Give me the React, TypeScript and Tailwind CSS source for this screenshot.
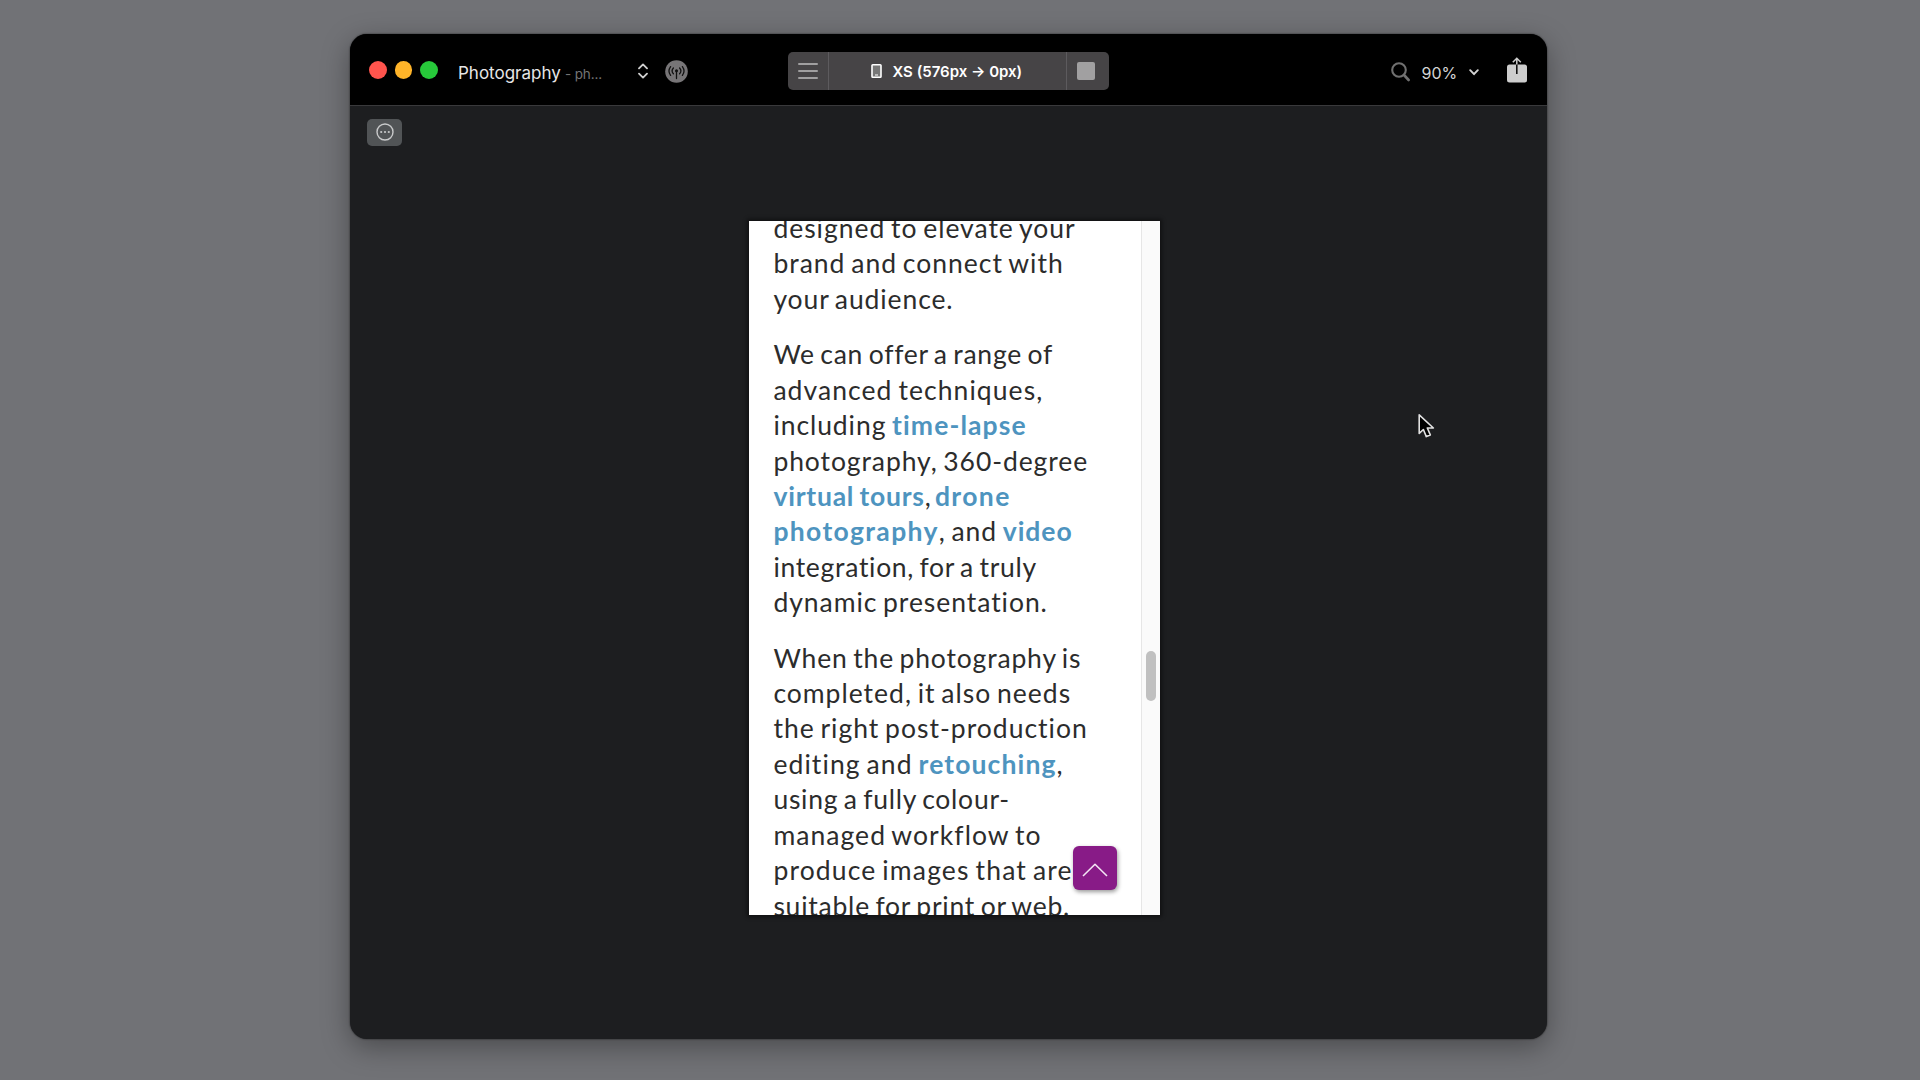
import React from 'react';

interface Segment {
  text: string;
  spacing: string;
  link?: boolean;
}

const paragraphs: Segment[][][] = [
  [
    [{ text: 'designed to elevate your', spacing: 'tracking-[0.98px]' }],
    [{ text: 'brand and connect with', spacing: 'tracking-[1px]' }],
    [{ text: 'your audience.', spacing: 'tracking-[0.9px]' }],
  ],
  [
    [{ text: 'We can offer a range of', spacing: 'tracking-[0.74px]' }],
    [{ text: 'advanced techniques,', spacing: 'tracking-[1.07px]' }],
    [
      { text: 'including ', spacing: 'tracking-[0.93px]' },
      { text: 'time-lapse', spacing: 'tracking-[1.1px]', link: true },
    ],
    [{ text: 'photography, 360-degree', spacing: 'tracking-[0.92px]' }],
    [
      { text: 'virtual tours', spacing: 'tracking-[0.77px]', link: true },
      { text: ', ', spacing: 'tracking-[-0.3px]' },
      { text: 'drone', spacing: 'tracking-[1.4px]', link: true },
    ],
    [
      { text: 'photography', spacing: 'tracking-[1.35px]', link: true },
      { text: ', and ', spacing: 'tracking-[0.92px]' },
      { text: 'video', spacing: 'tracking-[0.95px]', link: true },
    ],
    [{ text: 'integration, for a truly', spacing: 'tracking-[0.7px]' }],
    [{ text: 'dynamic presentation.', spacing: 'tracking-[0.95px]' }],
  ],
  [
    [{ text: 'When the photography is', spacing: 'tracking-[0.83px]' }],
    [{ text: 'completed, it also needs', spacing: 'tracking-[1px]' }],
    [{ text: 'the right post-production', spacing: 'tracking-[1px]' }],
    [
      { text: 'editing and ', spacing: 'tracking-[1.1px]' },
      { text: 'retouching', spacing: 'tracking-[1.12px]', link: true },
      { text: ',', spacing: 'tracking-normal' },
    ],
    [{ text: 'using a fully colour-', spacing: 'tracking-[0.75px]' }],
    [{ text: 'managed workflow to', spacing: 'tracking-[1.05px]' }],
    [{ text: 'produce images that are', spacing: 'tracking-[1.15px]' }],
    [{ text: 'suitable for print or web.', spacing: 'tracking-[0.77px]' }],
  ],
];

const WindowButtons: React.FC = () => (
  <div className="flex gap-2">
    <span className="size-[17.5px] rounded-full bg-[#ff544d]" />
    <span className="size-[17.5px] rounded-full bg-[#ffb429]" />
    <span className="size-[17.5px] rounded-full bg-[#27c93a]" />
  </div>
);

const TitleBar: React.FC = () => (
  <header className="flex h-[72px] shrink-0 items-start border-b border-[#39393b] bg-black pl-[19px] text-[#e6e6e6]">
    <div className="pt-[27px]">
      <WindowButtons />
    </div>
    <div className="ml-[20.5px] flex h-6 w-[180px] items-baseline pt-[27px] whitespace-pre">
      <span className="w-[107px] text-[17px] leading-6">Photography</span>
      <span className="text-[13.5px] leading-6 tracking-[-0.15px] text-[#747474]">- ph...</span>
    </div>
    <svg className="mt-[29px]" width="10" height="16" viewBox="0 0 10 16" fill="none" stroke="#cfcfcf" strokeWidth="1.8">
      <path d="M1 5.4 5 1.4l4 4M1 10.6l4 4 4-4" strokeLinecap="round" strokeLinejoin="round" />
    </svg>
    <svg className="mt-[26px] ml-[17px]" width="23" height="23" viewBox="0 0 23 23" fill="none" stroke="#111" strokeWidth="1.3" strokeLinecap="round">
      <circle cx="11.5" cy="11.5" r="11.3" fill="#777577" stroke="none" />
      <circle cx="11.5" cy="10.8" r="1.5" fill="#111" stroke="none" />
      <path d="M11.5 11v7.5M8.4 8a4.3 4.3 0 0 0 0 5.8M14.6 8a4.3 4.3 0 0 1 0 5.8M5.6 6.6a7.4 7.4 0 0 0 0 8.8M17.4 6.6a7.4 7.4 0 0 1 0 8.8" />
    </svg>

    {/* Breakpoint selector */}
    <div className="mt-[18px] ml-[100px] flex h-[38px] w-[321px] items-stretch overflow-hidden rounded-[5px] bg-[#464446] text-white">
      <div className="flex w-[41px] flex-col items-center justify-center gap-[4.6px] border-r border-[#5d5b5e]">
        <span className="h-[2.3px] w-[20px] rounded-full bg-[#a09fa0]" />
        <span className="h-[2.3px] w-[20px] rounded-full bg-[#a09fa0]" />
        <span className="h-[2.3px] w-[20px] rounded-full bg-[#a09fa0]" />
      </div>
      <div className="flex w-[238px] items-center border-r border-[#5d5b5e] pl-[42px]">
        <svg width="11" height="14" viewBox="0 0 11 14">
          <rect x="1" y="0.8" width="9" height="12.4" rx="0.8" fill="#777" stroke="#fff" strokeWidth="1.6" />
          <path d="M4 11h3" stroke="#fff" strokeWidth="1.2" />
        </svg>
        <span className="ml-[10.5px] pt-px text-[15px] leading-5 font-semibold whitespace-nowrap">XS (576px → 0px)</span>
      </div>
      <div className="flex flex-1 items-center justify-center pr-1">
        <span className="size-[18.5px] rounded-[2px] bg-[#a1a0a1]" />
      </div>
    </div>

    {/* Zoom level */}
    <svg className="mt-7 ml-[282px]" width="19" height="20" viewBox="0 0 19 20" fill="none" stroke="#707070" strokeWidth="2.1">
      <circle cx="8" cy="8" r="6.8" />
      <path d="m13 13 4.6 5" strokeWidth="2.6" strokeLinecap="round" />
    </svg>
    <span className="mt-[27px] ml-[11.5px] w-[37px] text-[16px] leading-6 text-[#d4d4d4]">90%</span>
    <svg className="mt-[35px] ml-[10px]" width="10" height="7" viewBox="0 0 10 7" fill="none" stroke="#d4d4d4" strokeWidth="1.9">
      <path d="m1.2 1.2 3.8 4 3.8-4" strokeLinecap="round" strokeLinejoin="round" />
    </svg>
    <svg className="mt-[23px] ml-7" width="20" height="26" viewBox="0 0 20 26" fill="none">
      <rect x="0" y="7.5" width="20" height="18" rx="2.5" fill="#cdcdcd" />
      <path d="M9.8 7v10" stroke="#111" strokeWidth="1.6" />
      <path d="M9.8 7.5V1.4M5.8 5.2l4-4 4 4" stroke="#cdcdcd" strokeWidth="1.5" />
    </svg>
  </header>
);

const PhotographyPage: React.FC = () => (
  <div className="relative flex h-[694px] w-[411px] overflow-hidden bg-white font-['Lato','Liberation_Sans',sans-serif] text-[26.5px] leading-[35.45px] text-[#2c2c2c]">
    <div className="-mt-[9.5px] flex w-[392px] shrink-0 flex-col gap-[19.8px] pl-[24.7px] [word-spacing:-2px]">
      {paragraphs.map((lines, p) => (
        <p key={p}>
          {lines.map((line, l) => (
            <span key={l} className="block whitespace-pre">
              {line.map((seg) => (
                <span key={seg.text} className={seg.link ? `font-bold text-[#4e94bf] ${seg.spacing}` : seg.spacing}>
                  {seg.text}
                </span>
              ))}
            </span>
          ))}
        </p>
      ))}
    </div>

    {/* Scrollbar */}
    <div className="h-full flex-1 border-l border-[#e6e6e6] bg-[#fafafa] pt-[430px] pl-[4.5px]">
      <div className="h-[50.5px] w-[10px] rounded-full bg-[#c0c0c0]" />
    </div>

    {/* Back to top */}
    <button className="absolute top-[625px] left-[324px] flex size-[44.5px] items-center justify-center rounded-[6px] bg-[#881b87] pt-[5px] shadow-[1px_2px_4px_rgba(0,0,0,0.4)]">
      <svg width="26" height="14" viewBox="0 0 26 14" fill="none" stroke="#f3e6f4" strokeWidth="1.6">
        <path d="M1 13 13 1.3 25 13" strokeLinejoin="round" />
      </svg>
    </button>
  </div>
);

const App: React.FC = () => {
  return (
    <div className="h-[1080px] w-[1920px] overflow-hidden bg-[#717276] pt-[34px] pl-[350px] font-['Inter','Liberation_Sans',sans-serif]">
      <div className="relative flex h-[1005px] w-[1197px] flex-col overflow-hidden rounded-[17px] bg-[#1d1e20] shadow-[0_8px_28px_rgba(0,0,0,0.35),0_0_2px_rgba(0,0,0,0.7)]">
        <TitleBar />
        <div className="flex h-[114.5px] shrink-0 pt-[13px] pl-[17px]">
          <button className="flex h-[27px] w-[35px] items-center justify-center rounded-[5px] bg-[#515456] pb-px">
            <svg width="18" height="18" viewBox="0 0 18 18" fill="none">
              <circle cx="9" cy="9" r="8" stroke="#c8c9ca" strokeWidth="1.4" />
              <circle cx="5.2" cy="9" r="1.1" fill="#c8c9ca" />
              <circle cx="9" cy="9" r="1.1" fill="#c8c9ca" />
              <circle cx="12.8" cy="9" r="1.1" fill="#c8c9ca" />
            </svg>
          </button>
        </div>
        <div className="ml-[398.7px] w-[411px] shadow-[0_0_4px_2px_rgba(0,0,0,0.45)]">
          <PhotographyPage />
        </div>

        {/* Pointer */}
        <svg className="absolute top-[379px] left-[1068px]" width="18" height="26" viewBox="0 0 18 26">
          <path d="M1.2 1.8v18.6l4.2-3.9 2.9 7.1 4-1.7-3-6.9h6.1z" fill="#000" stroke="#e2e2e2" strokeWidth="1.6" strokeLinejoin="round" />
        </svg>
      </div>
    </div>
  );
};

export default App;
